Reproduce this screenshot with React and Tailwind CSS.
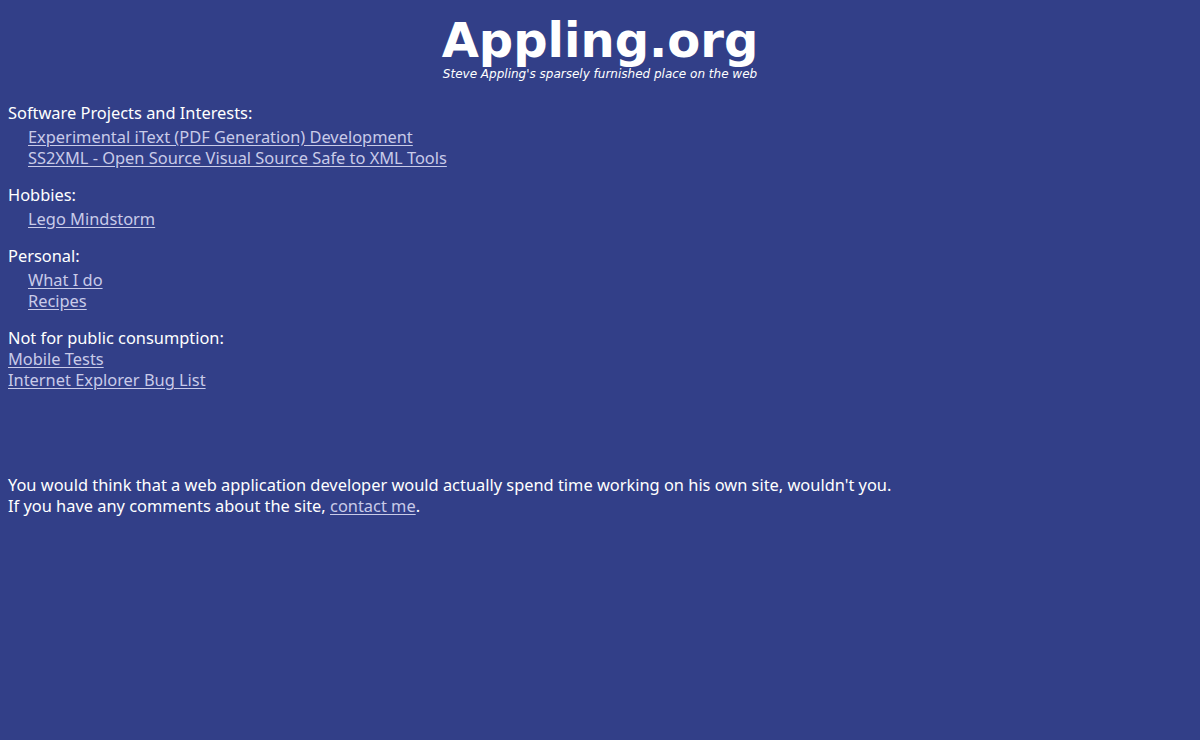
import React from 'react';

const Section = ({ title, links, indent = true, className = '' }) => (
  <div className={className}>
    <div>{title}</div>
    <div className={indent ? 'pl-5 mt-[3px]' : ''}>
      {links.map((l) => (
        <div key={l}>
          <a href="#" className="text-[#c9cbe8] underline underline-offset-2">{l}</a>
        </div>
      ))}
    </div>
  </div>
);

export default function App() {
  return (
    <div className="min-h-[740px] bg-[#323f88] text-white p-2 font-['Noto_Sans',sans-serif] text-[16.4px] leading-[21px]">
      <div className="text-center pt-[4px]">
        <div className="font-['DejaVu_Sans',sans-serif] font-bold text-[48px] leading-[56px]">Appling.org</div>
        <div className="font-['DejaVu_Sans',sans-serif] italic text-[12px] leading-[14px] -mt-[1px]">
          Steve Appling's sparsely furnished place on the web
        </div>
      </div>

      <div className="mt-[21px]">
        <Section
          title="Software Projects and Interests:"
          links={['Experimental iText (PDF Generation) Development', 'SS2XML - Open Source Visual Source Safe to XML Tools']}
        />
        <Section className="mt-4" title="Hobbies:" links={['Lego Mindstorm']} />
        <Section className="mt-4" title="Personal:" links={['What I do', 'Recipes']} />
        <Section
          className="mt-4"
          title="Not for public consumption:"
          indent={false}
          links={['Mobile Tests', 'Internet Explorer Bug List']}
        />
      </div>

      <div className="mt-[84px]">
        <div>You would think that a web application developer would actually spend time working on his own site, wouldn't you.</div>
        <div>
          If you have any comments about the site,{' '}
          <a href="#" className="text-[#c9cbe8] underline underline-offset-2">contact me</a>.
        </div>
      </div>
    </div>
  );
}
